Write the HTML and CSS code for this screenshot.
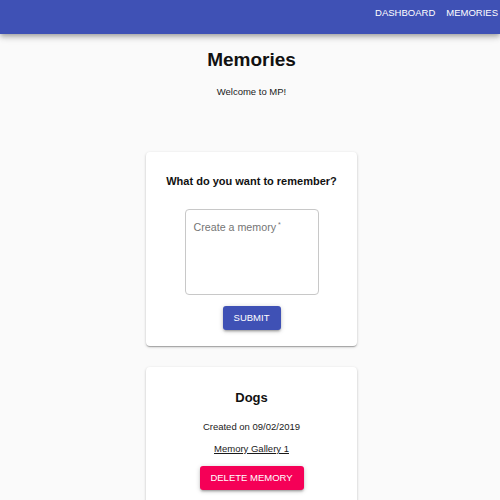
FILE: index.html
```html
<!DOCTYPE html>
<html>
<head>
<meta charset="utf-8">
<link rel="stylesheet" href="styles.css">
</head>
<body>
<header class="appbar">
  <nav class="nav">
    <a class="nav-link" href="#">DASHBOARD</a>
    <a class="nav-link" href="#">MEMORIES</a>
  </nav>
</header>
<main class="main">
  <h1 class="page-title">Memories</h1>
  <p class="welcome">Welcome to MP!</p>
  <section class="card card-form">
    <h2 class="form-title">What do you want to remember?</h2>
    <div class="field">
      <span class="field-label">Create a memory<span class="req">*</span></span>
    </div>
    <button class="btn btn-primary">SUBMIT</button>
  </section>
  <section class="card card-memory">
    <h2 class="memory-title">Dogs</h2>
    <p class="memory-date">Created on 09/02/2019</p>
    <a class="memory-link" href="#">Memory Gallery 1</a>
    <button class="btn btn-danger">DELETE MEMORY</button>
  </section>
</main>
</body>
</html>
```
FILE: styles.css
```css
* { box-sizing: border-box; }
html, body { margin: 0; padding: 0; }
body {
  background: #fafafa;
  font-family: "Liberation Sans", Arial, sans-serif;
  color: #1a1a1a;
  width: 500px;
  height: 500px;
  overflow: hidden;
}
.appbar {
  height: 34px;
  background: #3f51b5;
  box-shadow: 0 2px 4px -1px rgba(0,0,0,0.2), 0 4px 5px 0 rgba(0,0,0,0.14), 0 1px 10px 0 rgba(0,0,0,0.12);
  display: flex;
  justify-content: flex-end;
  position: relative;
  z-index: 2;
}
.nav {
  display: flex;
  gap: 11px;
  padding: 7px 2px 0 0;
}
.nav-link {
  color: #fff;
  text-decoration: none;
  font-size: 9.5px;
  line-height: 12px;
}
.main {
  display: flex;
  flex-direction: column;
  align-items: center;
  padding-left: 3px;
}
.page-title {
  margin: 14px 0 0;
  font-size: 19px;
  line-height: 24px;
  font-weight: bold;
  color: #111;
}
.welcome {
  margin: 13px 0 0;
  font-size: 9.5px;
  line-height: 14px;
}
.card {
  width: 211px;
  background: #fff;
  border-radius: 4px;
  box-shadow: 0 1px 3px rgba(0,0,0,0.2), 0 1px 1px rgba(0,0,0,0.14), 0 2px 1px -1px rgba(0,0,0,0.12);
  display: flex;
  flex-direction: column;
  align-items: center;
}
.card-form {
  margin-top: 53px;
  padding: 21px 0 16px;
}
.form-title {
  margin: 0;
  font-size: 11px;
  line-height: 16px;
  font-weight: bold;
  color: #111;
}
.field {
  margin-top: 20px;
  width: 134px;
  height: 86px;
  border: 1px solid #c8c8c8;
  border-radius: 4px;
  padding: 7px 8px;
}
.field-label {
  font-size: 10.7px;
  line-height: 14px;
  color: #757575;
}
.req {
  font-size: 7px;
  vertical-align: 4px;
  margin-left: 2px;
}
.btn {
  border: 0;
  border-radius: 3px;
  color: #fff;
  font-family: "Liberation Sans", Arial, sans-serif;
  font-size: 9.5px;
  height: 24px;
  line-height: 24px;
  padding: 0;
  box-shadow: 0 1px 5px 0 rgba(0,0,0,0.2), 0 2px 2px 0 rgba(0,0,0,0.14), 0 3px 1px -2px rgba(0,0,0,0.12);
}
.btn-primary {
  margin-top: 11px;
  width: 58px;
  background: #3f51b5;
}
.card-memory {
  margin-top: 21px;
  padding: 21px 0 16px;
}
.memory-title {
  margin: 0;
  font-size: 13px;
  line-height: 20px;
  font-weight: bold;
  color: #111;
}
.memory-date {
  margin: 12px 0 0;
  font-size: 9.5px;
  line-height: 14px;
}
.memory-link {
  margin-top: 8px;
  font-size: 9.5px;
  line-height: 14px;
  color: #1a1a1a;
}
.btn-danger {
  margin-top: 10px;
  width: 104px;
  background: #f50057;
}
```
